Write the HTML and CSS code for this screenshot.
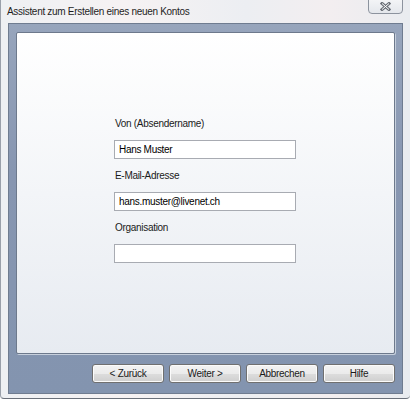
FILE: index.html
```html
<!DOCTYPE html>
<html lang="de">
<head>
    <meta charset="UTF-8">
    <title>Assistent zum Erstellen eines neuen Kontos</title>
    <link rel="stylesheet" href="styles.css">
</head>
<body>
    <div class="window">
        <div class="titlebar">
            <span class="title">Assistent zum Erstellen eines neuen Kontos</span>
            <div class="close-btn">
                <svg width="11" height="9" viewBox="0 0 11 9">
                    <path d="M2 1.5 L9 7.5 M9 1.5 L2 7.5" stroke="#6b7078" stroke-width="3" stroke-linecap="square"/>
                    <path d="M2 1.5 L9 7.5 M9 1.5 L2 7.5" stroke="#ffffff" stroke-width="1"/>
                </svg>
            </div>
        </div>
        <div class="client">
            <div class="panel">
                <div class="form">
                    <label class="field-label">Von (Absendername)</label>
                    <div class="textbox">Hans Muster</div>
                    <label class="field-label">E-Mail-Adresse</label>
                    <div class="textbox">hans.muster@livenet.ch</div>
                    <label class="field-label">Organisation</label>
                    <div class="textbox"></div>
                </div>
            </div>
            <div class="buttons">
                <button>&lt; Zurück</button>
                <button>Weiter &gt;</button>
                <button>Abbrechen</button>
                <button>Hilfe</button>
            </div>
        </div>
    </div>
</body>
</html>
```

FILE: styles.css
```css
body {
    margin: 0;
    background-color: #ffffff;
    font-family: "Liberation Sans", Arial, sans-serif;
    font-size: 10px;
    letter-spacing: -0.3px;
    color: #000000;
}
.window {
    width: 410px;
    height: 399px;
    box-sizing: border-box;
    padding: 0 7px 4px 7px;
    display: flex;
    flex-direction: column;
    background: linear-gradient(90deg, #eef0f3 0%, #f6f2f3 30%, #eceef2 60%, #f3eef0 80%, #e9ecf0 100%);
    border-left: 1px solid #9aa0aa;
    border-bottom: 1px solid #6a707a;
    border-radius: 0 0 4px 4px;
    overflow: hidden;
}
.titlebar {
    height: 23px;
    display: flex;
    align-items: flex-start;
    margin-left: -1px;
}
.title {
    padding-top: 6px;
    color: #1e1e1e;
}
.close-btn {
    margin-left: auto;
    margin-top: -2px;
    width: 35px;
    height: 16px;
    box-sizing: border-box;
    border: 1px solid #8c939e;
    border-radius: 0 0 4px 4px;
    background: linear-gradient(#f4f5f7, #e4e7ec);
    display: flex;
    align-items: center;
    justify-content: center;
    padding-top: 1px;
}
.client {
    flex: 1;
    padding: 8px 7px 0 7px;
    background: linear-gradient(#97a5bc, #8796b1 40%, #8394af);
    border: 1px solid #6f7c90;
}
.panel {
    height: 320px;
    background: linear-gradient(#ffffff, #f3f5f8 50%, #e7ebf1);
    border: 1px solid #6d798c;
    border-radius: 2px;
    box-shadow: 1px 1px 0 #c7d0dd;
}
.form {
    width: 182px;
    margin-left: 97px;
    padding-top: 83px;
    display: flex;
    flex-direction: column;
}
.field-label {
    height: 16px;
    line-height: 16px;
    margin-bottom: 8px;
    padding-left: 1px;
    color: #1a1a1a;
}
.textbox {
    height: 19px;
    line-height: 17px;
    box-sizing: border-box;
    border: 1px solid #a8abb2;
    background-color: #ffffff;
    padding-left: 4px;
    margin-bottom: 9px;
}
.buttons {
    display: flex;
    justify-content: flex-end;
    gap: 5px;
    margin-top: 10px;
}
button {
    width: 72px;
    height: 19px;
    padding: 0;
    font-family: inherit;
    font-size: 10px;
    letter-spacing: -0.3px;
    color: #1a1a1a;
    border: 1px solid #707070;
    border-radius: 3px;
    background: linear-gradient(#f3f3f3 0%, #ebebeb 50%, #dddddd 51%, #cfcfcf 100%);
    box-shadow: inset 0 0 0 1px #fbfbfb;
}
```
